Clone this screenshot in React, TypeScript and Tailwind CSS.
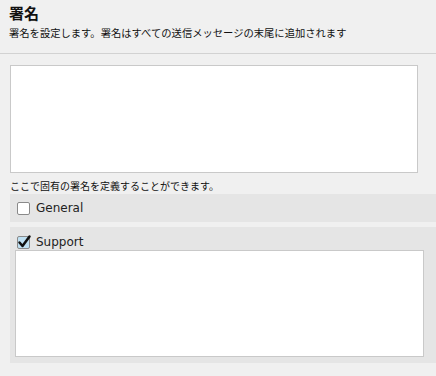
import React from "react";

const jp = { fontFamily: '"Noto Sans CJK JP", sans-serif' };
const lat = { fontFamily: '"DejaVu Sans", Verdana, sans-serif' };

function Box({ checked }: { checked?: boolean }) {
  return (
    <svg width="15" height="14" viewBox="0 0 15 14" className="shrink-0 overflow-visible">
      <rect x="0.5" y="1.5" width="12" height="12" rx="1.5" fill={checked ? "#bfe0f2" : "#ffffff"} stroke="#8a8a8a" />
      {checked && (
        <path d="M2.5 7.5 L5.5 11 L12.5 1.5" fill="none" stroke="#111" strokeWidth="2.5" strokeLinecap="round" strokeLinejoin="round" />
      )}
    </svg>
  );
}

export default function App() {
  return (
    <div className="w-[436px] h-[376px] bg-[#f0f0f0] text-[#111] overflow-hidden">
      <div className="h-[54px] border-b border-[#d2d2d2] pl-[9px] pt-[4px]">
        <div className="text-[15px] font-bold leading-[18px]" style={jp}>署名</div>
        <div className="text-[10.3px] leading-[14px] mt-[4px]" style={jp}>
          署名を設定します。署名はすべての送信メッセージの末尾に追加されます
        </div>
      </div>
      <div className="pl-[10px] pt-[11px]">
        <div className="w-[408px] h-[108px] bg-white border border-[#c9c9c9]" />
        <div className="text-[10px] leading-[12px] mt-[7px]" style={jp}>
          ここで固有の署名を定義することができます。
        </div>
        <div className="mt-[2px] h-[28px] bg-[#e5e5e5] flex items-center pl-[7px] gap-[4px]">
          <Box />
          <span className="text-[12px] text-[#222]" style={lat}>General</span>
        </div>
        <div className="mt-[5px] h-[136px] bg-[#e5e5e5] pl-[5px] pt-[8px]">
          <div className="flex items-center pl-[2px] gap-[4px] h-[14px]">
            <Box checked />
            <span className="text-[12px] text-[#222]" style={lat}>Support</span>
          </div>
          <div className="mt-[1px] w-[409px] h-[107px] bg-white border border-[#c9c9c9]" />
        </div>
      </div>
    </div>
  );
}
